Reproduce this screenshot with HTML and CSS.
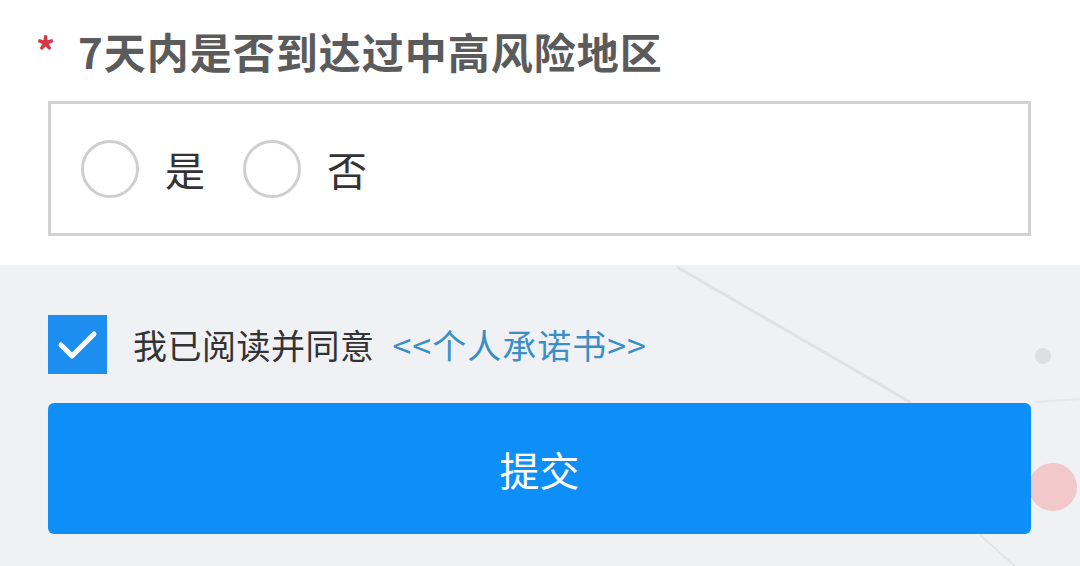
FILE: index.html
```html
<!DOCTYPE html>
<html lang="zh-CN">
<head>
    <meta charset="UTF-8">
    <meta name="viewport" content="width=device-width, initial-scale=1.0">
    <title>健康申报</title>
    <link rel="stylesheet" href="styles.css">
</head>
<body>
    <div class="question">
        <div class="title">
            <span class="required">*</span>
            <span class="title-text">7天内是否到达过中高风险地区</span>
        </div>
        <div class="options">
            <label class="option"><span class="radio"></span><span class="option-text">是</span></label>
            <label class="option"><span class="radio"></span><span class="option-text">否</span></label>
        </div>
    </div>
    <div class="footer">
        <svg class="deco" width="1080" height="301" viewBox="0 0 1080 301">
            <line x1="677" y1="2" x2="910" y2="137" stroke="#dfe1e5" stroke-width="3"/>
            <line x1="980" y1="270" x2="1015" y2="301" stroke="#e3e4e8" stroke-width="2"/>
            <line x1="1035" y1="137" x2="1080" y2="134" stroke="#e6e7eb" stroke-width="2"/>
            <circle cx="1043" cy="91" r="8" fill="#dedfe4"/>
            <circle cx="1053" cy="222" r="24" fill="#f2c8cb"/>
        </svg>
        <div class="agree">
            <span class="checkbox">
                <svg width="59" height="59" viewBox="0 0 59 59">
                    <path d="M13 30 L24 41 L46 19" fill="none" stroke="#fff" stroke-width="5" stroke-linecap="round" stroke-linejoin="round"/>
                </svg>
            </span>
            <span class="agree-text">我已阅读并同意</span>
            <a class="agree-link" href="#">&lt;&lt;个人承诺书&gt;&gt;</a>
        </div>
        <button class="submit" type="button">提交</button>
    </div>
</body>
</html>
```

FILE: styles.css
```css
body {
    margin: 0;
    width: 1080px;
    height: 566px;
    overflow: hidden;
    font-family: "Noto Sans CJK SC", "Noto Sans", sans-serif;
    background-color: #eff1f4;
}
.question {
    background-color: #fff;
    padding: 26px 49px 29px 48px;
    height: 210px;
}
.title {
    display: flex;
    align-items: center;
    height: 50px;
    margin-left: -12px;
}
.required {
    color: #d6384a;
    font-size: 38px;
    font-weight: bold;
    width: 42px;
    margin-top: -4px;
}
.title-text {
    color: #5b5b5b;
    font-size: 42px;
    font-weight: bold;
    line-height: 50px;
    letter-spacing: 1px;
}
.options {
    margin-top: 25px;
    height: 129px;
    border: 3px solid #d2d2d2;
    display: flex;
    align-items: center;
    padding-left: 30px;
    gap: 38px;
}
.option {
    display: flex;
    align-items: center;
    gap: 26px;
}
.radio {
    width: 52px;
    height: 52px;
    border: 3px solid #cfcfcf;
    border-radius: 50%;
}
.option-text {
    font-size: 40px;
    color: #333;
}
.footer {
    position: relative;
    padding: 50px 49px 0 48px;
}
.deco {
    position: absolute;
    left: 0;
    top: 0;
}
.agree {
    position: relative;
    display: flex;
    align-items: center;
    height: 59px;
}
.checkbox {
    width: 59px;
    height: 59px;
    background-color: #1b8ef0;
    margin-right: 26px;
}
.checkbox svg {
    display: block;
}
.agree-text {
    font-size: 34px;
    color: #333;
    letter-spacing: 0.5px;
    margin-right: 18px;
}
.agree-link {
    font-size: 34px;
    color: #3a8fc6;
    letter-spacing: 1px;
    text-decoration: none;
}
.submit {
    position: relative;
    display: block;
    margin-top: 29px;
    width: 983px;
    height: 131px;
    border: none;
    border-radius: 6px;
    background-color: #0e8ff8;
    color: #fff;
    font-family: "Noto Sans CJK SC", "Noto Sans", sans-serif;
    font-size: 40px;
}
```
